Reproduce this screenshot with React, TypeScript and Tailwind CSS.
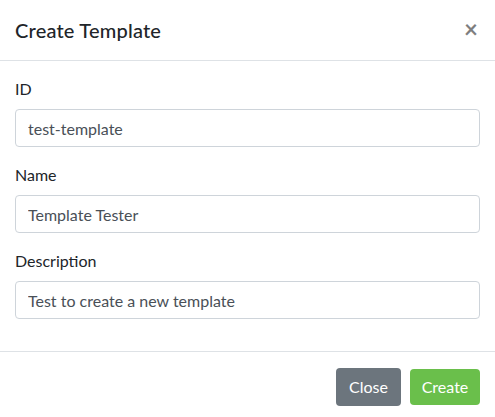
import React from "react";

const fields = [
  { id: "id", label: "ID", value: "test-template" },
  { id: "name", label: "Name", value: "Template Tester" },
  { id: "description", label: "Description", value: "Test to create a new template" },
];

export default function App() {
  return (
    <div
      className="h-[417px] w-[495px] overflow-hidden bg-white text-[#212529]"
      style={{ fontFamily: 'Lato, "Open Sans", Arial, sans-serif' }}
    >
      {/* header */}
      <div className="flex h-[61px] items-center justify-between border-b border-[#dee2e6] pl-[15px] pr-[17px]">
        <h5 className="text-[20px] leading-[30px] font-medium tracking-[0.2px]">Create Template</h5>
        <button className="pb-[2px] text-[24px] leading-none font-bold text-black opacity-50">×</button>
      </div>

      {/* body */}
      <div className="px-[15px] pt-4 pb-4">
        {fields.map((f) => (
          <div key={f.id} className="mb-4">
            <label className="mb-2 block text-[16px] leading-6">{f.label}</label>
            <input
              type="text"
              defaultValue={f.value}
              className="block h-[38px] w-full rounded border border-[#ced4da] bg-white px-3 text-[16px] text-[#495057] outline-none"
            />
          </div>
        ))}
      </div>

      {/* footer */}
      <div className="flex items-center justify-end gap-[9px] border-t border-[#dee2e6] px-[15px] pt-4">
        <button className="h-[38px] w-[65px] rounded bg-[#6c757d] text-[16px] text-white">Close</button>
        <button className="h-[36px] w-[70px] rounded bg-[#6abf4b] text-[16px] text-white">Create</button>
      </div>
    </div>
  );
}
